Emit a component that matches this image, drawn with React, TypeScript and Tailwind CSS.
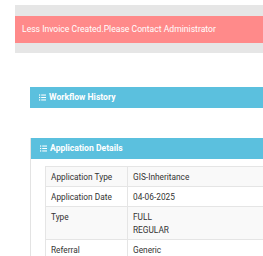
import React from 'react';

function ListIcon() {
  return (
    <svg width="7" height="7" viewBox="0 0 8 8" className="shrink-0" fill="white">
      <rect x="0" y="0.5" width="1.4" height="1.4" />
      <rect x="2.5" y="0.6" width="5.5" height="1.2" />
      <rect x="0" y="3.3" width="1.4" height="1.4" />
      <rect x="2.5" y="3.4" width="5.5" height="1.2" />
      <rect x="0" y="6.1" width="1.4" height="1.4" />
      <rect x="2.5" y="6.2" width="5.5" height="1.2" />
    </svg>
  );
}

function PanelHeader({ title }: { title: string }) {
  return (
    <div className="h-[21px] bg-[#5bc0de] flex items-center gap-[3px] pl-[9px] text-white font-bold text-[8.6px]">
      <ListIcon />
      <span>{title}</span>
    </div>
  );
}

const rows: { label: string; value: string[]; h: string }[] = [
  { label: 'Application Type', value: ['GIS-Inheritance'], h: 'h-[20px]' },
  { label: 'Application Date', value: ['04-06-2025'], h: 'h-[20px]' },
  { label: 'Type', value: ['FULL', 'REGULAR'], h: 'h-[33px]' },
  { label: 'Referral', value: ['Generic'], h: 'h-[20px]' },
];

export default function App() {
  return (
    <div className="w-[263px] h-[256px] overflow-hidden bg-white pt-[5px] pl-[15px]" style={{ fontFamily: 'Roboto, sans-serif' }}>
      {/* alert */}
      <div className="bg-[#e6e6e6] pt-[11px] pb-[10px]">
        <div className="h-[27px] bg-[#ff8a8a] flex items-center pl-[7px] text-white text-[8.6px] whitespace-nowrap">
          Less Invoice Created.Please Contact Administrator
        </div>
      </div>

      <div className="pl-[15px] pt-[34px]">
        {/* workflow history */}
        <PanelHeader title="Workflow History" />

        {/* application details */}
        <div className="mt-[30px] border-l border-[#e3e3e3]">
          <PanelHeader title="Application Details" />
          <div className="pl-[14px] pt-[7px]">
            <table className="w-[300px] table-fixed border-collapse text-[8.3px] text-[#333]">
              <tbody>
                {rows.map((r, i) => (
                  <tr key={r.label} className={`${r.h} ${i % 2 === 0 ? 'bg-[#f9f9f9]' : 'bg-white'}`}>
                    <td className="w-[82px] border border-[#e5e5e5] align-top pl-[5px] pt-[4px] p-0 leading-[13px] whitespace-nowrap">
                      {r.label}
                    </td>
                    <td className="border border-[#e5e5e5] align-top pl-[5px] pt-[4px] p-0 leading-[13px]">
                      {r.value.map((v) => (
                        <div key={v}>{v}</div>
                      ))}
                    </td>
                  </tr>
                ))}
              </tbody>
            </table>
          </div>
        </div>
      </div>
    </div>
  );
}
